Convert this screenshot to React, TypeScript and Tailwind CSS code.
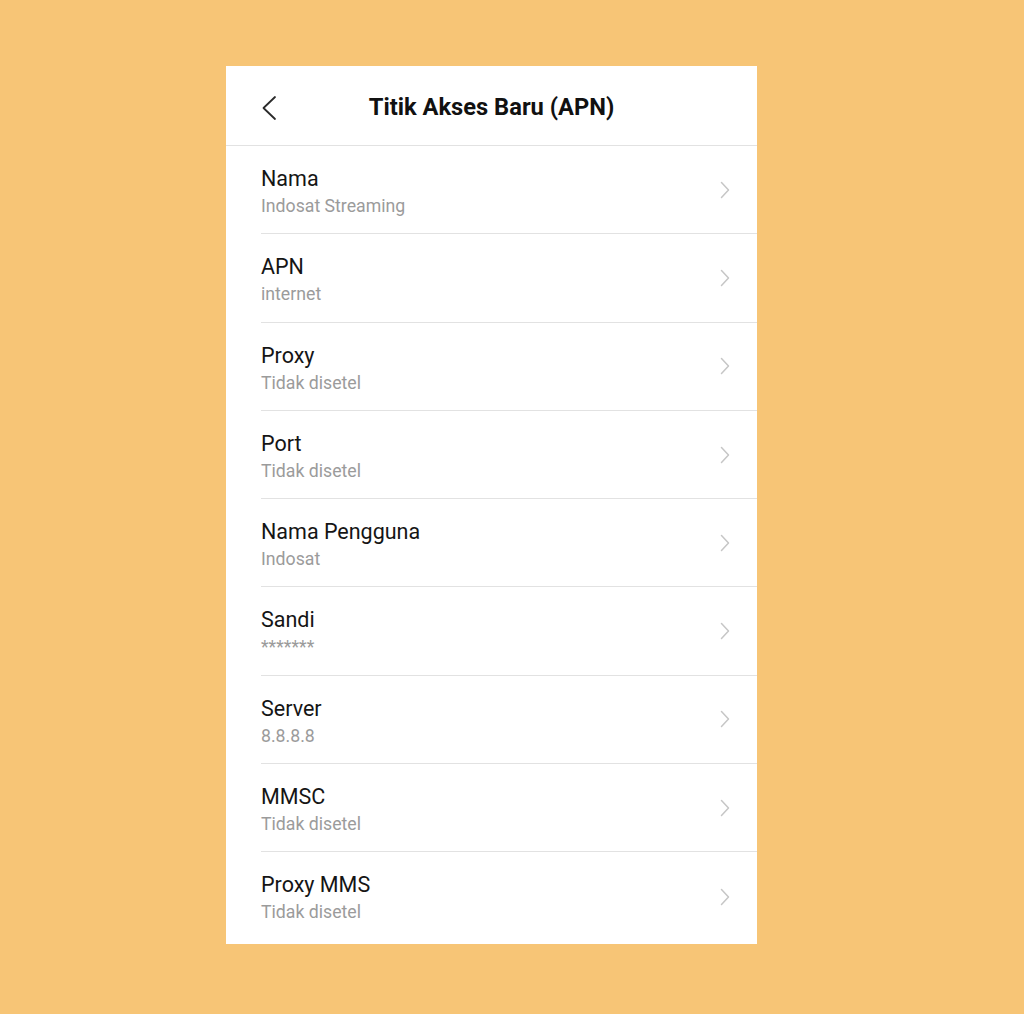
import React from "react";

const rows = [
  { t: "Nama", s: "Indosat Streaming" },
  { t: "APN", s: "internet" },
  { t: "Proxy", s: "Tidak disetel" },
  { t: "Port", s: "Tidak disetel" },
  { t: "Nama Pengguna", s: "Indosat" },
  { t: "Sandi", s: "*******" },
  { t: "Server", s: "8.8.8.8" },
  { t: "MMSC", s: "Tidak disetel" },
  { t: "Proxy MMS", s: "Tidak disetel" },
];

export default function App() {
  return (
    <div className="w-full h-[1014px] bg-[#f7c576] pl-[226px] pt-[66px] font-['Roboto',sans-serif]">
      <div className="w-[531px] h-[878px] bg-white flex flex-col">
        <div className="h-[80px] border-b border-[#e2e2e2] relative flex items-center justify-center shrink-0">
          <svg className="absolute left-[35px] top-[29px]" width="16" height="26" viewBox="0 0 16 26" fill="none">
            <path d="M14 2 L2.5 13 L14 24" stroke="#2a2a2a" strokeWidth="1.8" strokeLinecap="round" strokeLinejoin="round" />
          </svg>
          <div className="text-[23.7px] font-bold text-[#111] leading-[28px] pt-[2px]">Titik Akses Baru (APN)</div>
        </div>
        {rows.map((r, i) => (
          <div key={i} className="h-[88.3px] shrink-0 pl-[35px]">
            <div className={`h-full flex items-center pr-[27px] ${i < rows.length - 1 ? "border-b border-[#e2e2e2]" : ""}`}>
              <div className="flex-1 self-start pt-[20px]">
                <div className="text-[21.5px] leading-[26px] text-[#151515]">{r.t}</div>
                <div className="text-[17.7px] leading-[21px] text-[#9b9b9b] mt-[4px]">{r.s}</div>
              </div>
              <svg width="10" height="18" viewBox="0 0 10 18" fill="none">
                <path d="M1.5 1.5 L8.5 9 L1.5 16.5" stroke="#c6c6c6" strokeWidth="1.5" strokeLinecap="round" strokeLinejoin="round" />
              </svg>
            </div>
          </div>
        ))}
      </div>
    </div>
  );
}
